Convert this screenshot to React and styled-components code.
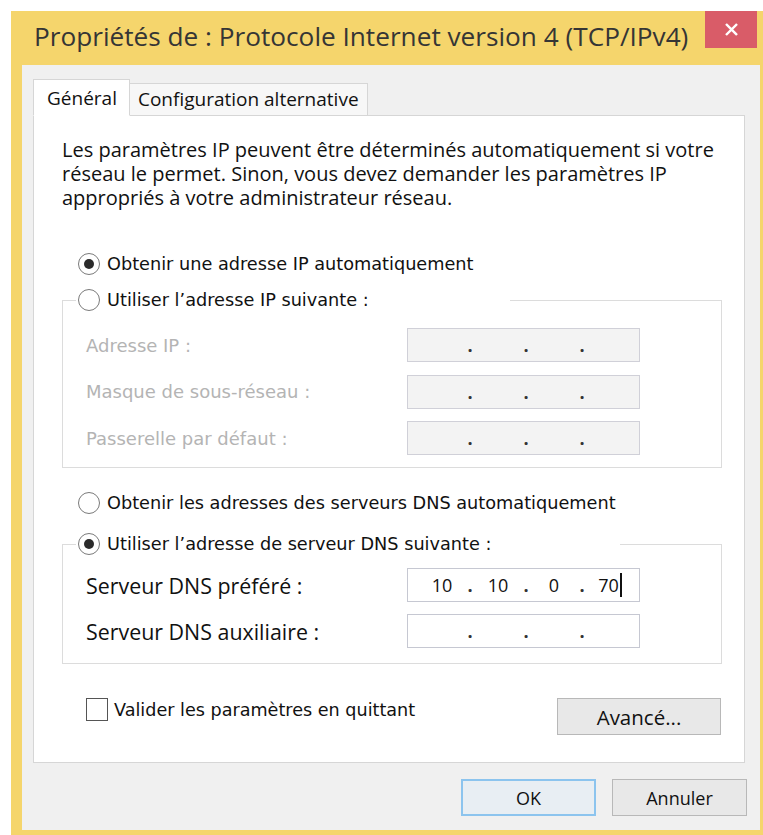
import React from 'react';
import styled, { createGlobalStyle, css } from 'styled-components';

const GlobalStyle = createGlobalStyle`
  html, body {
    margin: 0;
    background: #ffffff;
    overflow: hidden;
  }
  * { box-sizing: border-box; }
`;

const ui = `"Open Sans", "Noto Sans", sans-serif`;
const classic = `"DejaVu Sans", "Liberation Sans", sans-serif`;

const Radio = ({ checked, children, disabled }) => (
  <RadioRow>
    <RadioDot checked={checked} />
    <RadioText disabled={disabled}>{children}</RadioText>
  </RadioRow>
);

const IpBox = ({ values, disabled, cursor }) => (
  <IpFrame disabled={disabled}>
    {[0, 1, 2, 3].map((i) => (
      <React.Fragment key={i}>
        {i > 0 && <IpDot>.</IpDot>}
        <IpPart>
          {values ? values[i] : ''}
          {cursor && i === 3 && <Caret />}
        </IpPart>
      </React.Fragment>
    ))}
  </IpFrame>
);

const App = () => {
  return (
    <>
      <GlobalStyle />
      <Frame>
        <TitleBar>
          <Title>Propriétés de : Protocole Internet version 4 (TCP/IPv4)</Title>
          <CloseButton>
            <svg width="13" height="13" viewBox="0 0 14 14">
              <path d="M2 2 L12 12 M12 2 L2 12" stroke="#fff" strokeWidth="2.6" strokeLinecap="square" />
            </svg>
          </CloseButton>
        </TitleBar>

        <Body>
          <Tabs>
            <Tab $active>Général</Tab>
            <Tab>Configuration alternative</Tab>
          </Tabs>

          <Panel>
            <Intro>
              Les paramètres IP peuvent être déterminés automatiquement si votre
              <br />
              réseau le permet. Sinon, vous devez demander les paramètres IP
              <br />
              appropriés à votre administrateur réseau.
            </Intro>

            <FreeRadio>
              <Radio checked>Obtenir une adresse IP automatiquement</Radio>
            </FreeRadio>

            <Group $top={6} $padTop={13} $padBottom={12}>
              <Legend $width={434}>
                <Radio>Utiliser l’adresse IP suivante :</Radio>
              </Legend>
              <Fields $gap={12.5}>
                <FieldLabel disabled>Adresse IP :</FieldLabel>
                <IpBox disabled />
                <FieldLabel disabled>Masque de sous-réseau :</FieldLabel>
                <IpBox disabled />
                <FieldLabel disabled>Passerelle par défaut :</FieldLabel>
                <IpBox disabled />
              </Fields>
            </Group>

            <FreeRadio $top={20}>
              <Radio>Obtenir les adresses des serveurs DNS automatiquement</Radio>
            </FreeRadio>

            <Group $top={11} $padTop={9} $padBottom={15}>
              <Legend $width={544}>
                <Radio checked>Utiliser l’adresse de serveur DNS suivante :</Radio>
              </Legend>
              <Fields $gap={12}>
                <FieldLabel>Serveur DNS préféré :</FieldLabel>
                <IpBox values={['10', '10', '0', '70']} cursor />
                <FieldLabel>Serveur DNS auxiliaire :</FieldLabel>
                <IpBox />
              </Fields>
            </Group>

            <BottomRow>
              <CheckLabel>
                <CheckBox />
                Valider les paramètres en quittant
              </CheckLabel>
              <Button $width={164} $size={20.5}>Avancé...</Button>
            </BottomRow>
          </Panel>

          <Actions>
            <Button $width={135} $primary>OK</Button>
            <Button $width={135}>Annuler</Button>
          </Actions>
        </Body>
      </Frame>
    </>
  );
};

const Frame = styled.div`
  margin: 11px 0 0 11px;
  width: 760px;
  background: #f5d56c;
  padding: 0 11px 8px 11px;
`;

const TitleBar = styled.div`
  height: 54px;
  display: flex;
  align-items: flex-start;
`;

const Title = styled.div`
  flex: 1;
  padding: 7px 0 0 12px;
  font-family: ${ui};
  font-size: 26.2px;
  color: #353535;
  white-space: nowrap;
`;

const CloseButton = styled.div`
  width: 52px;
  height: 37px;
  margin-right: 3px;
  background: #d95c68;
  display: flex;
  align-items: center;
  justify-content: center;
`;

const Body = styled.div`
  background: #f0f0f0;
  padding: 14px 15px 14px 11px;
`;

const Tabs = styled.div`
  display: flex;
  align-items: flex-end;
  position: relative;
  z-index: 1;
  margin-bottom: -1px;
`;

const Tab = styled.div`
  font-family: ${ui};
  font-size: 19px;
  color: #111;
  border: 1px solid #d6d6d6;
  display: flex;
  align-items: center;
  ${(p) =>
    p.$active
      ? css`
          height: 37px;
          padding: 0 12px 0 13px;
          background: #ffffff;
          border-bottom-color: #ffffff;
        `
      : css`
          height: 33px;
          padding: 0 8px 2px 8px;
          background: #f7f7f7;
          border-left: none;
        `}
`;

const Panel = styled.div`
  background: #ffffff;
  border: 1px solid #d6d6d6;
  padding: 22px 22px 27px 28px;
`;

const Intro = styled.p`
  margin: 0;
  font-family: ${ui};
  font-size: 20px;
  line-height: 24px;
  color: #111;
  white-space: nowrap;
`;

const FreeRadio = styled.div`
  margin: ${(p) => p.$top ?? 39}px 0 0 16px;
`;

const RadioRow = styled.div`
  height: 30px;
  display: flex;
  align-items: center;
  gap: 7px;
`;

const RadioDot = styled.span`
  flex: none;
  width: 22px;
  height: 22px;
  border-radius: 50%;
  border: 1.5px solid #7a7a7a;
  background: #ffffff;
  display: flex;
  align-items: center;
  justify-content: center;
  &::after {
    content: '';
    width: 10px;
    height: 10px;
    border-radius: 50%;
    background: #2b2b2b;
    display: ${(p) => (p.checked ? 'block' : 'none')};
  }
`;

const RadioText = styled.span`
  font-family: ${classic};
  font-size: 17.7px;
  color: ${(p) => (p.disabled ? '#a8a8a8' : '#111')};
  white-space: nowrap;
`;

const Group = styled.fieldset`
  margin: ${(p) => p.$top}px 0 0 0;
  border: 1px solid #dcdcdc;
  padding: ${(p) => p.$padTop}px 0 ${(p) => p.$padBottom}px 23px;
  min-width: 0;
`;

const Legend = styled.legend`
  width: ${(p) => p.$width}px;
  padding: 0 2px;
  margin-left: -10px;
  background: #ffffff;
`;

const Fields = styled.div`
  display: grid;
  grid-template-columns: 321px 233px;
  row-gap: ${(p) => p.$gap}px;
  align-items: center;
`;

const FieldLabel = styled.span`
  font-family: ${(p) => (p.disabled ? classic : ui)};
  font-size: ${(p) => (p.disabled ? '18px' : '21.4px')};
  color: ${(p) => (p.disabled ? '#b4b4b4' : '#111')};
  white-space: nowrap;
`;

const IpFrame = styled.div`
  height: 34px;
  border: 1px solid ${(p) => (p.disabled ? '#d0d0d8' : '#c6c8d2')};
  background: ${(p) => (p.disabled ? '#f3f3f3' : '#ffffff')};
  display: grid;
  grid-template-columns: 44px 12px 44px 12px 44px 12px 44px;
  align-items: center;
  padding-left: 12px;
  font-family: ${ui};
  font-size: 18px;
  color: #111;
`;

const IpPart = styled.span`
  display: flex;
  justify-content: center;
  align-items: center;
`;

const IpDot = styled.span`
  text-align: center;
  font-weight: 700;
  color: #333;
`;

const Caret = styled.span`
  display: inline-block;
  width: 2px;
  height: 24px;
  background: #111;
  margin-left: 1px;
`;

const BottomRow = styled.div`
  margin-top: 34px;
  display: flex;
  justify-content: space-between;
  align-items: flex-start;
  padding: 0 1px 0 24px;
`;

const CheckLabel = styled.label`
  display: flex;
  align-items: center;
  gap: 6px;
  height: 23px;
  font-family: ${classic};
  font-size: 17.6px;
  color: #111;
`;

const CheckBox = styled.span`
  width: 22px;
  height: 23px;
  border: 1.5px solid #555;
  background: #fff;
`;

const Button = styled.div`
  width: ${(p) => p.$width}px;
  height: 37px;
  display: flex;
  align-items: center;
  justify-content: center;
  font-family: ${ui};
  font-size: ${(p) => p.$size ?? 18}px;
  color: #111;
  background: ${(p) => (p.$primary ? '#e8eef3' : '#e8e8e8')};
  border: ${(p) => (p.$primary ? '2px solid #8cc4ee' : '1px solid #b8b8b8')};
`;

const Actions = styled.div`
  margin-top: 16px;
  display: flex;
  justify-content: flex-end;
  gap: 16px;
  margin-right: -2px;
`;

export default App;
